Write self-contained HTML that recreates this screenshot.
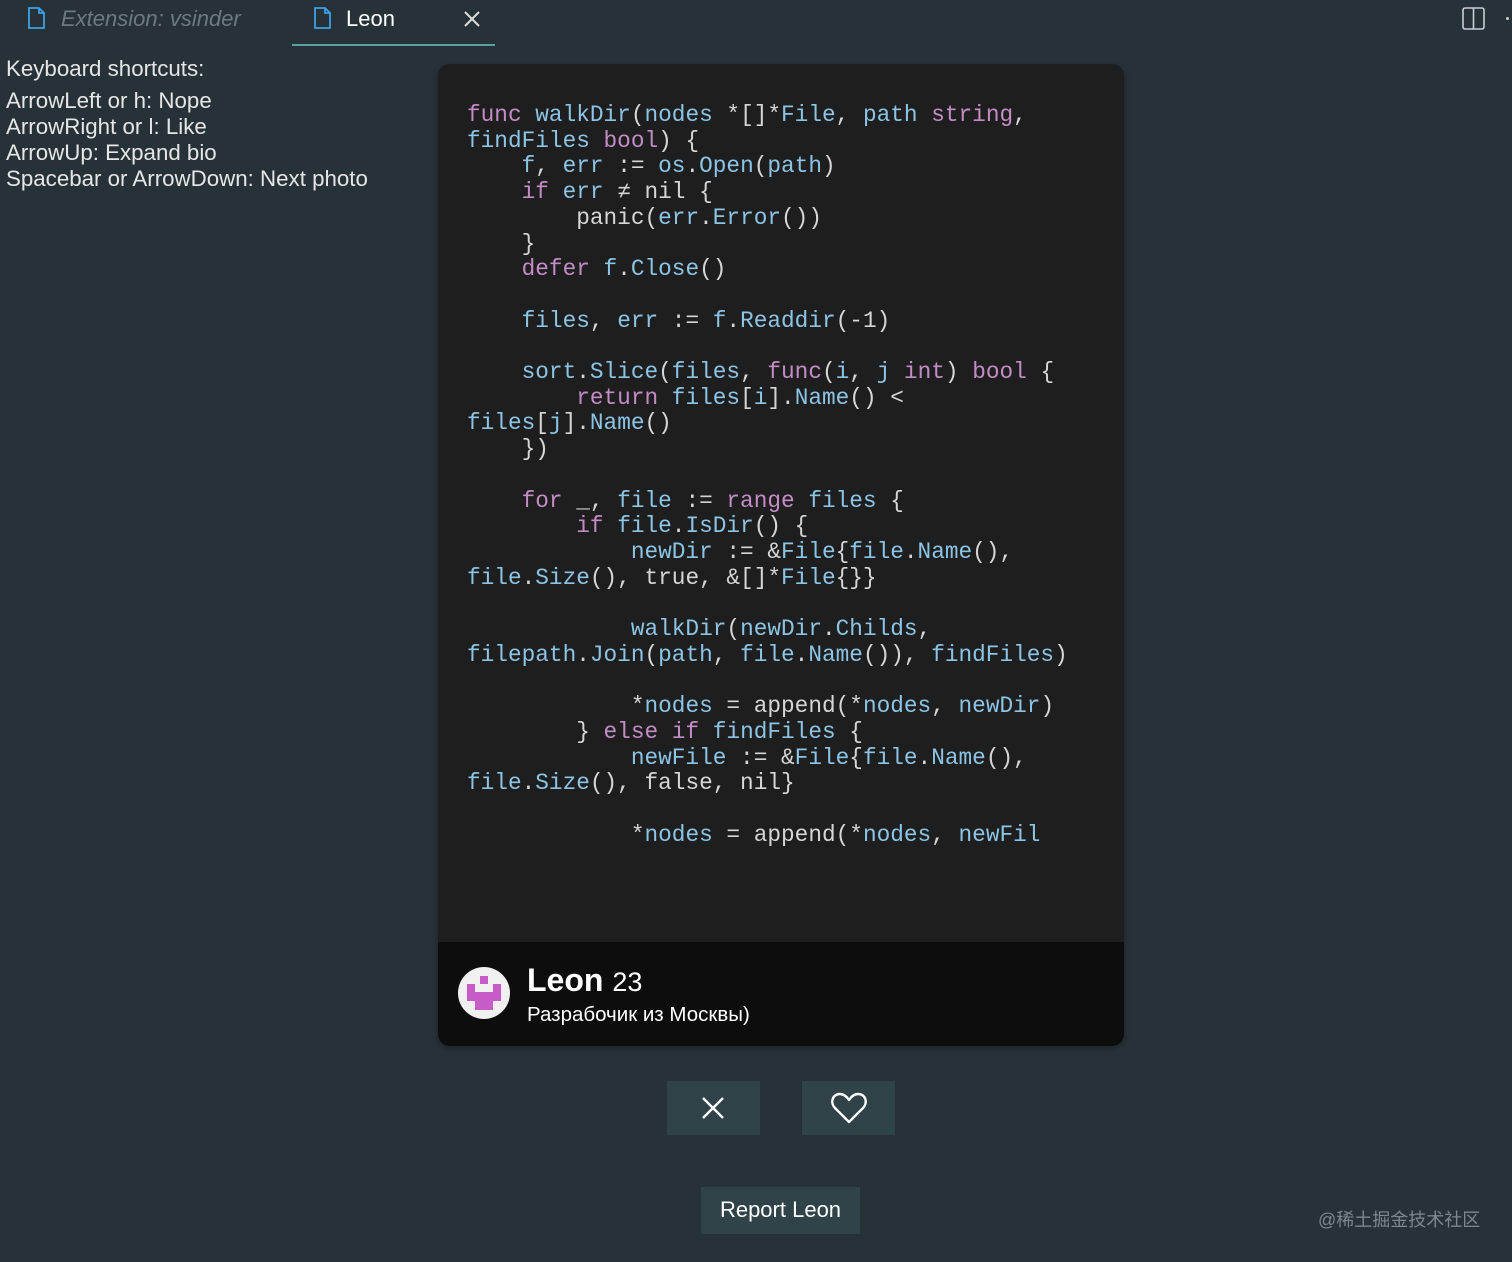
<!DOCTYPE html>
<html><head><meta charset="utf-8"><style>
*{margin:0;padding:0;box-sizing:border-box}
body{width:1512px;height:1262px;background:#263238;position:relative;overflow:hidden;font-family:"Liberation Sans",sans-serif;color:#e8e8e8}
.tab{position:absolute;top:0;height:46px;font-size:22px;line-height:38px}
.left{position:absolute;left:6px;top:56px;font-size:22.3px;line-height:26px;color:#e6e6e6}
.card{position:absolute;left:438px;top:64px;width:686px;height:982px;background:#1e1e1e;border-radius:12px;overflow:hidden;box-shadow:0 2px 6px rgba(0,0,0,.3)}
pre{position:absolute;left:29px;top:39px;font-family:"Liberation Mono",monospace;font-size:22.75px;line-height:25.7px;color:#d6d6d6;letter-spacing:0}
.k{color:#c48cc6}.v{color:#8cc4e6}
.foot{position:absolute;left:0;top:878px;width:686px;height:104px;background:#0d0d0d}
.btn{position:absolute;background:#2f4349}
</style></head><body>
<div class="tab" style="left:26px;width:250px">
<svg style="position:absolute;left:0;top:6px" width="22" height="24" viewBox="0 0 22 24"><path d="M3 2h10l5 5v15H3z M13 2v5h5" fill="none" stroke="#3ea0e8" stroke-width="1.8"/></svg>
<span style="position:absolute;left:35px;font-style:italic;color:#6c7a80">Extension: vsinder</span></div>
<div class="tab" style="left:292px;width:203px;border-bottom:2px solid #5e9ea0">
<svg style="position:absolute;left:20px;top:6px" width="22" height="24" viewBox="0 0 22 24"><path d="M3 2h10l5 5v15H3z M13 2v5h5" fill="none" stroke="#3ea0e8" stroke-width="1.8"/></svg>
<span style="position:absolute;left:54px;color:#fff">Leon</span>
<svg style="position:absolute;left:171px;top:10px" width="18" height="18" viewBox="0 0 18 18"><path d="M2 2L16 16M16 2L2 16" stroke="#ddd" stroke-width="2"/></svg></div>
<svg style="position:absolute;left:1462px;top:7px" width="23" height="23" viewBox="0 0 23 23"><rect x="1" y="1" width="21" height="21" rx="2" fill="none" stroke="#c8cdd0" stroke-width="1.6"/><path d="M11.5 1v21" stroke="#c8cdd0" stroke-width="1.6"/></svg>
<div style="position:absolute;left:1506px;top:17px;width:3px;height:3px;background:#ccc;border-radius:50%"></div>
<div class="left">Keyboard shortcuts:<div style="height:6px"></div>ArrowLeft or h: Nope<br>ArrowRight or l: Like<br>ArrowUp: Expand bio<br>Spacebar or ArrowDown: Next photo</div>
<div class="card">
<pre><span class="k">func</span> <span class="v">walkDir</span>(<span class="v">nodes</span> *[]*<span class="v">File</span>, <span class="v">path</span> <span class="k">string</span>,
<span class="v">findFiles</span> <span class="k">bool</span>) {
    <span class="v">f</span>, <span class="v">err</span> := <span class="v">os</span>.<span class="v">Open</span>(<span class="v">path</span>)
    <span class="k">if</span> <span class="v">err</span> ≠ nil {
        panic(<span class="v">err</span>.<span class="v">Error</span>())
    }
    <span class="k">defer</span> <span class="v">f</span>.<span class="v">Close</span>()

    <span class="v">files</span>, <span class="v">err</span> := <span class="v">f</span>.<span class="v">Readdir</span>(-1)

    <span class="v">sort</span>.<span class="v">Slice</span>(<span class="v">files</span>, <span class="k">func</span>(<span class="v">i</span>, <span class="v">j</span> <span class="k">int</span>) <span class="k">bool</span> {
        <span class="k">return</span> <span class="v">files</span>[<span class="v">i</span>].<span class="v">Name</span>() &lt;
<span class="v">files</span>[<span class="v">j</span>].<span class="v">Name</span>()
    })

    <span class="k">for</span> _, <span class="v">file</span> := <span class="k">range</span> <span class="v">files</span> {
        <span class="k">if</span> <span class="v">file</span>.<span class="v">IsDir</span>() {
            <span class="v">newDir</span> := &amp;<span class="v">File</span>{<span class="v">file</span>.<span class="v">Name</span>(),
<span class="v">file</span>.<span class="v">Size</span>(), true, &amp;[]*<span class="v">File</span>{}}

            <span class="v">walkDir</span>(<span class="v">newDir</span>.<span class="v">Childs</span>,
<span class="v">filepath</span>.<span class="v">Join</span>(<span class="v">path</span>, <span class="v">file</span>.<span class="v">Name</span>()), <span class="v">findFiles</span>)

            *<span class="v">nodes</span> = append(*<span class="v">nodes</span>, <span class="v">newDir</span>)
        } <span class="k">else if</span> <span class="v">findFiles</span> {
            <span class="v">newFile</span> := &amp;<span class="v">File</span>{<span class="v">file</span>.<span class="v">Name</span>(),
<span class="v">file</span>.<span class="v">Size</span>(), false, nil}

            *<span class="v">nodes</span> = append(*<span class="v">nodes</span>, <span class="v">newFil</span></pre>
<div class="foot">
<svg style="position:absolute;left:20px;top:25px" width="52" height="52" viewBox="0 0 52 52"><circle cx="26" cy="26" r="26" fill="#f0f0f0"/><rect x="22" y="9" width="8" height="8" fill="#c75cc9"/><rect x="9" y="17" width="8" height="8" fill="#c75cc9"/><rect x="35" y="17" width="8" height="8" fill="#c75cc9"/><rect x="9" y="25" width="34" height="9" fill="#c75cc9"/><rect x="17" y="34" width="18" height="9" fill="#c75cc9"/></svg>
<div style="position:absolute;left:89px;top:20px;font-size:32px;line-height:36px;color:#fff"><b>Leon</b> <span style="font-size:27px">23</span></div>
<div style="position:absolute;left:89px;top:61px;font-size:20.5px;color:#fff">Разрабочик из Москвы)</div>
</div></div>
<div class="btn" style="left:667px;top:1081px;width:93px;height:54px"><svg style="position:absolute;left:34px;top:15px" width="24" height="24" viewBox="0 0 24 24"><path d="M2 2L22 22M22 2L2 22" stroke="#fff" stroke-width="2.4"/></svg></div>
<div class="btn" style="left:802px;top:1081px;width:93px;height:54px"><svg style="position:absolute;left:28px;top:10px" width="38" height="34" viewBox="0 0 38 34"><path d="M19 31L5 17C0 12 2 3 10 3c4 0 7 3 9 6c2-3 5-6 9-6c8 0 10 9 5 14z" fill="none" stroke="#fff" stroke-width="2.4" stroke-linejoin="round"/></svg></div>
<div class="btn" style="left:701px;top:1187px;width:159px;height:47px;font-size:22px;color:#fff;text-align:center;line-height:46px">Report Leon</div>
<div style="position:absolute;left:1318px;top:1206px;font-size:18px;color:#7d878c;font-family:'Liberation Sans','Noto Sans CJK SC',sans-serif">@稀土掘金技术社区</div>
</body></html>
